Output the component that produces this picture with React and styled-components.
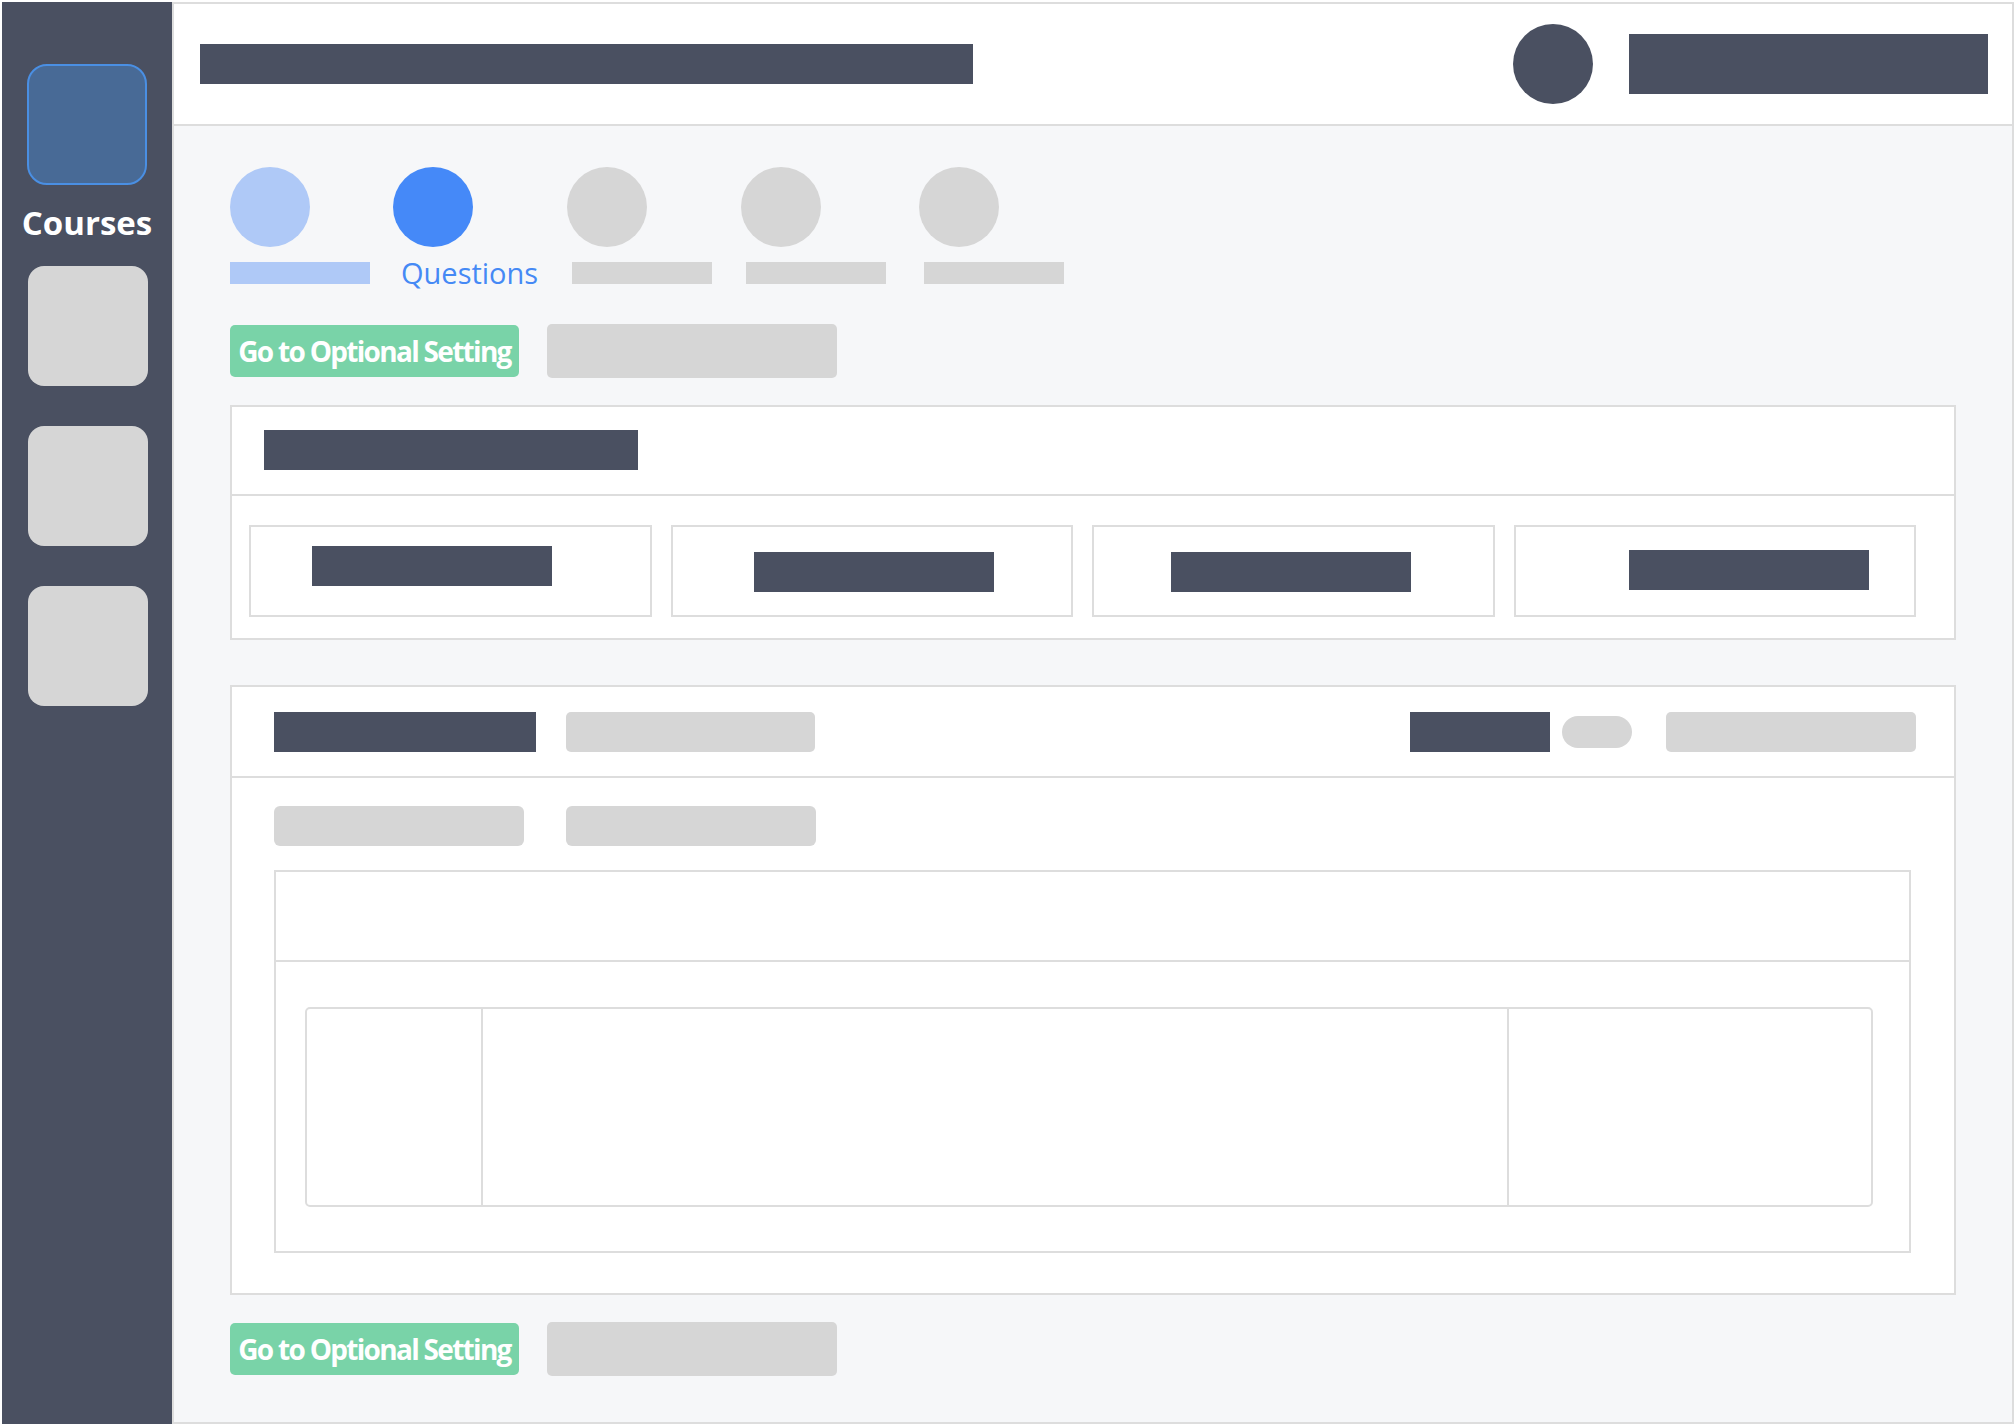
import React from "react";
import styled, { createGlobalStyle } from "styled-components";

const DARK = "#4a5061";
const GRAY = "#d6d6d6";
const LINE = "#dddddd";

const GlobalStyle = createGlobalStyle`
  html, body { margin: 0; padding: 0; background: #ffffff; }
  body { font-family: "Open Sans", "Noto Sans", sans-serif; }
  * { box-sizing: border-box; }
`;

const Frame = styled.div`
  display: flex;
  margin: 2px;
  width: 2012px;
  height: 1422px;
`;

const Sidebar = styled.nav`
  width: 170px;
  flex: none;
  background: ${DARK};
  display: flex;
  flex-direction: column;
  align-items: center;
  padding-top: 62px;
`;

const NavTile = styled.div`
  width: 120px;
  height: ${(p) => (p.$active ? "121px" : "120px")};
  border-radius: ${(p) => (p.$active ? "20px" : "16px")};
  background: ${(p) => (p.$active ? "#486a96" : GRAY)};
  border: ${(p) => (p.$active ? "2px solid #4a8fe3" : "none")};
  margin-bottom: 40px;
  transform: translateX(${(p) => (p.$active ? "0" : "1px")});
`;

const NavLabel = styled.div`
  color: #ffffff;
  font-family: "Open Sans", "Noto Sans", sans-serif;
  font-weight: 700;
  font-size: 33px;
  line-height: 33px;
  margin: -19px 0 27px;
`;

const Main = styled.main`
  flex: 1;
  border: 2px solid ${LINE};
  background: #f6f7f9;
  display: flex;
  flex-direction: column;
  min-width: 0;
`;

const Header = styled.header`
  height: 122px;
  flex: none;
  background: #ffffff;
  border-bottom: 2px solid ${LINE};
  display: flex;
  align-items: center;
  padding: 0 24px 0 26px;
`;

const Block = styled.div`
  flex: none;
  width: ${(p) => p.$w}px;
  height: ${(p) => p.$h || 40}px;
  background: ${(p) => (p.$tone === "gray" ? GRAY : DARK)};
  border-radius: ${(p) => p.$r || 0}px;
`;

const Spacer = styled.div`
  flex: 1;
`;

const Avatar = styled.div`
  width: 80px;
  height: 80px;
  border-radius: 50%;
  background: ${DARK};
  margin-right: 36px;
`;

const Content = styled.section`
  padding: 41px 56px 0;
  display: flex;
  flex-direction: column;
`;

const Steps = styled.ol`
  list-style: none;
  margin: 0;
  padding: 0;
  display: grid;
  grid-template-columns: 163px 174px 174px 178px 145px;
`;

const Step = styled.li`
  display: flex;
  flex-direction: column;
  align-items: flex-start;
`;

const StepDot = styled.div`
  width: 80px;
  height: 80px;
  border-radius: 50%;
  background: ${(p) =>
    p.$state === "done" ? "#afc9f7" : p.$state === "current" ? "#4589f8" : GRAY};
`;

const StepBar = styled.div`
  width: 140px;
  height: 22px;
  margin: 15px 0 0 ${(p) => p.$shift || 0}px;
  background: ${(p) => (p.$state === "done" ? "#afc9f7" : GRAY)};
`;

const StepText = styled.div`
  margin: 9px 0 0 ${(p) => p.$shift || 0}px;
  color: #4589f5;
  font-family: "Open Sans", "Noto Sans", sans-serif;
  font-size: 29px;
  line-height: 34px;
  height: 22px;
  white-space: nowrap;
`;

const ButtonRow = styled.div`
  display: flex;
  align-items: center;
  gap: 28px;
  margin-top: ${(p) => p.$top}px;
`;

const GreenButton = styled.button`
  width: 289px;
  height: 52px;
  border: none;
  border-radius: 5px;
  background: #79d3a8;
  color: #ffffff;
  font-family: "Open Sans", "Noto Sans", sans-serif;
  font-weight: 700;
  font-size: 28px;
  letter-spacing: -1.7px;
  white-space: nowrap;
  padding: 0;
  display: flex;
  align-items: center;
  justify-content: center;
`;

const GhostButton = styled.div`
  width: 290px;
  height: 54px;
  border-radius: 5px;
  background: ${GRAY};
`;

const Panel = styled.div`
  margin-top: ${(p) => p.$top}px;
  background: #ffffff;
  border: 2px solid ${LINE};
`;

const PanelHead = styled.div`
  height: ${(p) => p.$h}px;
  border-bottom: 2px solid ${LINE};
  display: flex;
  align-items: ${(p) => (p.$top ? "flex-start" : "center")};
  padding: ${(p) => (p.$top ? `${p.$top}px` : "0")} ${(p) => p.$pr || 0}px 0 ${(p) => p.$pl}px;
`;

const HeadGroup = styled.div`
  display: flex;
  align-items: center;
  gap: ${(p) => p.$gap}px;
`;

const ToolGroup = styled.div`
  display: flex;
  align-items: center;
  gap: 12px;
  margin-right: 34px;
`;

const Cards = styled.div`
  display: grid;
  grid-template-columns: repeat(4, 1fr);
  gap: 19px;
  padding: 29px 38px 21px 17px;
`;

const Card = styled.div`
  height: 92px;
  border: 2px solid ${LINE};
  padding: ${(p) => p.$y - 2}px 0 0 ${(p) => p.$x - 2}px;
`;

const PanelBody = styled.div`
  padding: 28px 43px 40px 42px;
  display: flex;
  flex-direction: column;
`;

const TabRow = styled.div`
  display: flex;
  gap: 42px;
`;

const Editor = styled.div`
  margin-top: 24px;
  border: 2px solid ${LINE};
`;

const EditorHead = styled.div`
  height: 90px;
  border-bottom: 2px solid ${LINE};
`;

const EditorBody = styled.div`
  padding: 45px 36px 44px 29px;
`;

const Table = styled.div`
  height: 200px;
  border: 2px solid ${LINE};
  border-radius: 5px;
  display: grid;
  grid-template-columns: 174px 1fr 364px;
`;

const Cell = styled.div`
  border-left: ${(p) => (p.$first ? "none" : `2px solid ${LINE}`)};
`;

const steps = [
  { state: "done", shift: 0 },
  { state: "current", shift: 8, label: "Questions" },
  { state: "todo", shift: 5 },
  { state: "todo", shift: 5 },
  { state: "todo", shift: 5 },
];

const cards = [
  { x: 63, y: 21 },
  { x: 83, y: 27 },
  { x: 79, y: 27 },
  { x: 115, y: 25 },
];

export default function App() {
  return (
    <>
      <GlobalStyle />
      <Frame>
        <Sidebar>
          <NavTile $active />
          <NavLabel>Courses</NavLabel>
          <NavTile />
          <NavTile />
          <NavTile />
        </Sidebar>
        <Main>
          <Header>
            <Block $w={773} />
            <Spacer />
            <Avatar />
            <Block $w={359} $h={60} />
          </Header>
          <Content>
            <Steps>
              {steps.map((s, i) => (
                <Step key={i}>
                  <StepDot $state={s.state} />
                  {s.label ? (
                    <StepText $shift={s.shift}>{s.label}</StepText>
                  ) : (
                    <StepBar $state={s.state} $shift={s.shift} />
                  )}
                </Step>
              ))}
            </Steps>
            <ButtonRow $top={40}>
              <GreenButton>Go to Optional Setting</GreenButton>
              <GhostButton />
            </ButtonRow>
            <Panel $top={27}>
              <PanelHead $h={89} $pl={32} $top={23}>
                <Block $w={374} />
              </PanelHead>
              <Cards>
                {cards.map((c, i) => (
                  <Card key={i} $x={c.x} $y={c.y}>
                    <Block $w={240} />
                  </Card>
                ))}
              </Cards>
            </Panel>
            <Panel $top={45}>
              <PanelHead $h={91} $pl={42} $pr={38}>
                <HeadGroup $gap={30}>
                  <Block $w={262} />
                  <Block $w={249} $tone="gray" $r={5} />
                </HeadGroup>
                <Spacer />
                <ToolGroup>
                  <Block $w={140} />
                  <Block $w={70} $h={32} $tone="gray" $r={16} />
                </ToolGroup>
                <Block $w={250} $tone="gray" $r={5} />
              </PanelHead>
              <PanelBody>
                <TabRow>
                  <Block $w={250} $tone="gray" $r={6} />
                  <Block $w={250} $tone="gray" $r={6} />
                </TabRow>
                <Editor>
                  <EditorHead />
                  <EditorBody>
                    <Table>
                      <Cell $first />
                      <Cell />
                      <Cell />
                    </Table>
                  </EditorBody>
                </Editor>
              </PanelBody>
            </Panel>
            <ButtonRow $top={27}>
              <GreenButton>Go to Optional Setting</GreenButton>
              <GhostButton />
            </ButtonRow>
          </Content>
        </Main>
      </Frame>
    </>
  );
}
